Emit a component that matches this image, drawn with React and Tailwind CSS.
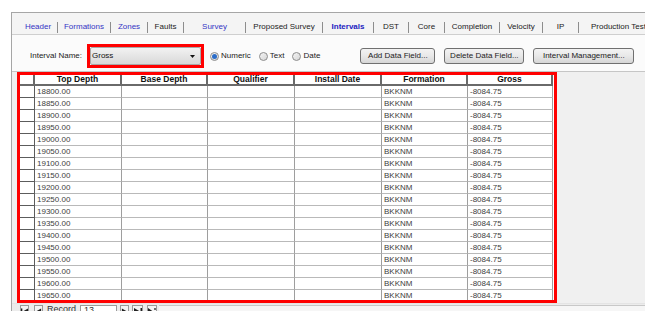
import React from 'react'

const tabs = [
  { label: 'Header', w: 'w-[39px]', cls: 'text-[#3434c4]' },
  { label: 'Formations', w: 'w-[53px]', cls: 'text-[#3434c4]' },
  { label: 'Zones', w: 'w-[37px]', cls: 'text-[#3434c4]' },
  { label: 'Faults', w: 'w-[36px]', cls: 'text-[#222]' },
  { label: 'Survey', w: 'w-[62px]', cls: 'text-[#3434c4]' },
  { label: 'Proposed Survey', w: 'w-[77px]', cls: 'text-[#222]' },
  { label: 'Intervals', w: 'w-[51px]', cls: 'text-[#2222c0] font-bold' },
  { label: 'DST', w: 'w-[35px]', cls: 'text-[#222]' },
  { label: 'Core', w: 'w-[36px]', cls: 'text-[#222]' },
  { label: 'Completion', w: 'w-[55px]', cls: 'text-[#222]' },
  { label: 'Velocity', w: 'w-[43px]', cls: 'text-[#222]' },
  { label: 'IP', w: 'w-[36px]', cls: 'text-[#222]' },
  { label: 'Production Test', w: 'w-[80px]', cls: 'text-[#222]' },
]

const columns = [
  { label: 'Top Depth', w: 'w-[87px]' },
  { label: 'Base Depth', w: 'w-[86px]' },
  { label: 'Qualifier', w: 'w-[87px]' },
  { label: 'Install Date', w: 'w-[87px]' },
  { label: 'Formation', w: 'w-[86px]' },
  { label: 'Gross', w: 'w-[85px]' },
]

const rows = Array.from({ length: 18 }, (_, i) => (18800 + i * 50).toFixed(2))

function Radio({ checked, label }) {
  return (
    <div className="flex items-center">
      <div className="w-[9px] h-[9px] rounded-full border border-[#8c8c8c] bg-gradient-to-br from-[#f4f4f4] to-[#d6d6d6] flex items-center justify-center">
        {checked && <div className="w-[5px] h-[5px] rounded-full bg-[#2a6cc8]" />}
      </div>
      <span className="ml-[2px] text-[8px] text-[#222]">{label}</span>
    </div>
  )
}

function Button({ w, children }) {
  return (
    <div className={`${w} h-[16px] rounded-[3px] border border-[#707070] bg-gradient-to-b from-[#f3f3f3] via-[#e8e8e8] to-[#d6d6d6] flex items-center justify-center text-[8px] text-[#222]`}>
      {children}
    </div>
  )
}

// little navigator button, glyph drawn as svg
function NavBtn({ w, children }) {
  return (
    <div className={`${w} h-[12px] flex-none border border-[#9a9a9a] bg-[#f4f4f4] flex items-center justify-center`}>
      <svg width="8" height="7" viewBox="0 0 8 7">{children}</svg>
    </div>
  )
}

export default function App() {
  return (
    <div className="w-[654px] h-[324px] bg-white overflow-hidden font-['Liberation_Sans',Arial,sans-serif] leading-none">
      <div className="ml-[11px] mt-[12px] w-[634px] h-[299px] border-t border-l border-[#a6a6a6] overflow-hidden flex flex-col bg-[#f0f0f0]">
        {/* tabs */}
        <div className="h-[22px] flex-none flex pl-[7px] bg-[#f4f4f4] border-b border-[#cfcfcf]">
          {tabs.map((t) => (
            <div key={t.label} className={`${t.w} flex-none flex h-full`}>
              <div className={`flex-1 flex items-center justify-center pt-[7px] text-[8px] whitespace-nowrap ${t.cls}`}>
                {t.label}
              </div>
              <div className="w-px h-[11px] self-end mb-px bg-[#8d8d8d]" />
            </div>
          ))}
        </div>

        {/* toolbar */}
        <div className="h-[36px] flex-none bg-[#fbfbfb] pt-[9px] pl-[18px]">
          <div className="h-[24px] flex items-center">
            <span className="w-[57px] text-[8px] text-[#222]">Interval Name:</span>
            <div className="w-[117px] h-[24px] border-[3px] border-[#ff0000]">
              <div className="h-full border border-[#a9a9a9] rounded-[2px] bg-gradient-to-b from-[#f2f2f2] to-[#d9d9d9] flex items-center pl-[1px] pr-[5px]">
                <span className="text-[8px] text-[#111] flex-1">Gross</span>
                <svg width="5" height="3" viewBox="0 0 5 3">
                  <path d="M0 0 L5 0 L2.5 3 Z" fill="#111" />
                </svg>
              </div>
            </div>
            <div className="ml-[6px] flex items-center gap-[8px]">
              <Radio checked label="Numeric" />
              <Radio label="Text" />
              <Radio label="Date" />
            </div>
            <div className="ml-[40px] flex items-center gap-[9px]">
              <Button w="w-[75px]">Add Data Field...</Button>
              <Button w="w-[80px]">Delete Data Field...</Button>
              <Button w="w-[101px]">Interval Management...</Button>
            </div>
          </div>
        </div>

        {/* grid area */}
        <div className="flex-1 border-t border-[#c6c6c6] bg-[#f0f0f0] flex flex-col">
          <div className="ml-[5px] w-[540px] h-[231px] flex-none border-[3px] border-[#ff0000] overflow-hidden bg-white">
            <div className="flex h-[11px]">
              <div className="w-[15px] flex-none border-r-2 border-b-2 border-[#6a6a6a] bg-white" />
              {columns.map((c) => (
                <div
                  key={c.label}
                  className={`${c.w} flex-none border-r-2 border-b-2 border-[#6a6a6a] bg-white flex items-center justify-center text-[8.5px] font-bold text-[#111]`}
                >
                  {c.label}
                </div>
              ))}
            </div>
            {rows.map((r) => (
              <div key={r} className="flex h-[12px]">
                <div className="w-[15px] flex-none border-r border-b border-[#5c5c5c] bg-white" />
                {columns.map((c, i) => (
                  <div
                    key={c.label}
                    className={`${c.w} flex-none border-r border-b border-r-[#9e9e9e] border-b-[#b9b9b9] flex items-center pl-[2px] text-[8px] text-[#404040]`}
                  >
                    {i === 0 ? r : i === 4 ? 'BKKNM' : i === 5 ? '-8084.75' : ''}
                  </div>
                ))}
              </div>
            ))}
          </div>

          {/* record navigator, cut off by the frame bottom as in the screenshot */}
          <div className="h-[16px] flex-none flex items-start pt-[1px] border-t border-[#e4e4e4] bg-[#ececec]">
            <div className="ml-[8px]">
              <NavBtn w="w-[9px]">
                <rect x="0" y="0" width="1.5" height="7" fill="#222" />
                <path d="M8 0 L2 3.5 L8 7 Z" fill="#222" />
              </NavBtn>
            </div>
            <div className="ml-[5px]">
              <NavBtn w="w-[9px]">
                <path d="M7 0 L1 3.5 L7 7 Z" fill="#222" />
              </NavBtn>
            </div>
            <span className="ml-[4px] text-[9px] text-[#333]">Record</span>
            <div className="ml-[4px] w-[37px] h-[12px] border border-[#9a9a9a] bg-white pl-[3px] text-[9px] text-[#333]">13</div>
            <div className="ml-[3px]">
              <NavBtn w="w-[9px]">
                <path d="M1 0 L7 3.5 L1 7 Z" fill="#222" />
              </NavBtn>
            </div>
            <div className="ml-[3px]">
              <NavBtn w="w-[11px]">
                <path d="M0 0 L6 3.5 L0 7 Z" fill="#222" />
                <rect x="6.5" y="0" width="1.5" height="7" fill="#222" />
              </NavBtn>
            </div>
            <div className="ml-[4px]">
              <NavBtn w="w-[10px]">
                <path d="M0 0 L5 3.5 L0 7 Z" fill="#222" />
                <path d="M6 1 L8 1 M7 0 L7 2" stroke="#222" strokeWidth="0.8" />
              </NavBtn>
            </div>
            <div className="ml-[2px] flex-1 h-[12px] border-t border-[#c8c8c8] bg-[#f6f6f6]" />
          </div>
        </div>
      </div>
    </div>
  )
}
